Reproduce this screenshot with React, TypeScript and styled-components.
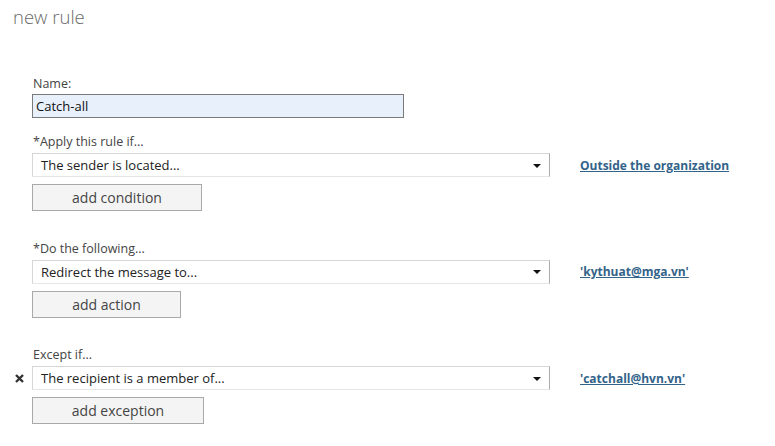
import React from "react";
import styled, { createGlobalStyle } from "styled-components";

const GlobalStyle = createGlobalStyle`
  html, body {
    margin: 0;
    padding: 0;
    background: #ffffff;
  }
  body {
    font-family: "Segoe UI", "Open Sans", "Liberation Sans", sans-serif;
    color: #333333;
  }
`;

const Page = styled.div`
  width: 775px;
  height: 446px;
  box-sizing: border-box;
  padding: 5px 0 0 0;
  overflow: hidden;
`;

const Title = styled.h1`
  margin: 0 0 0 13px;
  font-size: 18.5px;
  font-weight: 300;
  line-height: 24px;
  color: #6a6a6a;
`;

const Form = styled.div`
  display: flex;
  flex-direction: column;
  margin-top: 46px;
`;

const Section = styled.div<{ $gap: number }>`
  display: grid;
  grid-template-columns: 32px 518px auto;
  align-items: center;
  margin-bottom: ${(p) => p.$gap}px;
`;

const Label = styled.div<{ $space?: number }>`
  grid-column: 2 / 4;
  font-size: 12.5px;
  line-height: 17px;
  color: #444444;
  margin-bottom: ${(p) => p.$space ?? 3}px;
  padding-left: 1px;
`;

const NameInput = styled.div`
  grid-column: 2 / 3;
  width: 372px;
  height: 24px;
  box-sizing: border-box;
  border: 1px solid #7a7a7a;
  background: #e8f0fb;
  font-size: 13px;
  line-height: 22px;
  padding-left: 3px;
  color: #111111;
`;

const Gutter = styled.div`
  grid-column: 1 / 2;
  display: flex;
  justify-content: flex-end;
  padding-right: 8px;
`;

const Select = styled.div`
  grid-column: 2 / 3;
  height: 24px;
  box-sizing: border-box;
  border: 1px solid #d6d6d6;
  border-right-color: #ababab;
  border-bottom-color: #e6e6e6;
  display: flex;
  align-items: center;
  justify-content: space-between;
  padding: 0 8px 0 8px;
  font-size: 13px;
  color: #222222;
`;

const Arrow = styled.span`
  width: 0;
  height: 0;
  border-left: 4px solid transparent;
  border-right: 4px solid transparent;
  border-top: 4px solid #111111;
  margin-top: 1px;
`;

const ValueLink = styled.a`
  grid-column: 3 / 4;
  margin-left: 30px;
  font-size: 12px;
  font-weight: 700;
  color: #336389;
  text-decoration: underline;
  white-space: nowrap;
  cursor: pointer;
`;

const AddButton = styled.button<{ $w: number }>`
  grid-column: 2 / 3;
  width: ${(p) => p.$w}px;
  height: 27px;
  margin-top: 7px;
  box-sizing: border-box;
  border: 1px solid #a9a9a9;
  background: #f4f4f4;
  font-family: inherit;
  font-size: 14px;
  color: #444444;
  padding: 0;
  cursor: pointer;
`;

const RemoveIcon = () => (
  <svg width="9" height="9" viewBox="0 0 9 9">
    <path d="M1 1 L8 8 M8 1 L1 8" stroke="#333333" strokeWidth="2.4" strokeLinecap="butt" />
  </svg>
);

type Rule = {
  label: string;
  choice: string;
  value: string;
  button: string;
  width: number;
  removable?: boolean;
};

const rules: Rule[] = [
  {
    label: "*Apply this rule if...",
    choice: "The sender is located...",
    value: "Outside the organization",
    button: "add condition",
    width: 170,
  },
  {
    label: "*Do the following...",
    choice: "Redirect the message to...",
    value: "'kythuat@mga.vn'",
    button: "add action",
    width: 149,
  },
  {
    label: "Except if...",
    choice: "The recipient is a member of...",
    value: "'catchall@hvn.vn'",
    button: "add exception",
    width: 172,
    removable: true,
  },
];

export default function App() {
  return (
    <Page>
      <GlobalStyle />
      <Title>new rule</Title>
      <Form>
        <Section $gap={15}>
          <Label $space={2}>Name:</Label>
          <NameInput>Catch-all</NameInput>
        </Section>
        {rules.map((r, i) => (
          <Section key={i} $gap={28.5}>
            <Label>{r.label}</Label>
            <Gutter>{r.removable && <RemoveIcon />}</Gutter>
            <Select>
              <span>{r.choice}</span>
              <Arrow />
            </Select>
            <ValueLink>{r.value}</ValueLink>
            <AddButton $w={r.width}>{r.button}</AddButton>
          </Section>
        ))}
      </Form>
    </Page>
  );
}
